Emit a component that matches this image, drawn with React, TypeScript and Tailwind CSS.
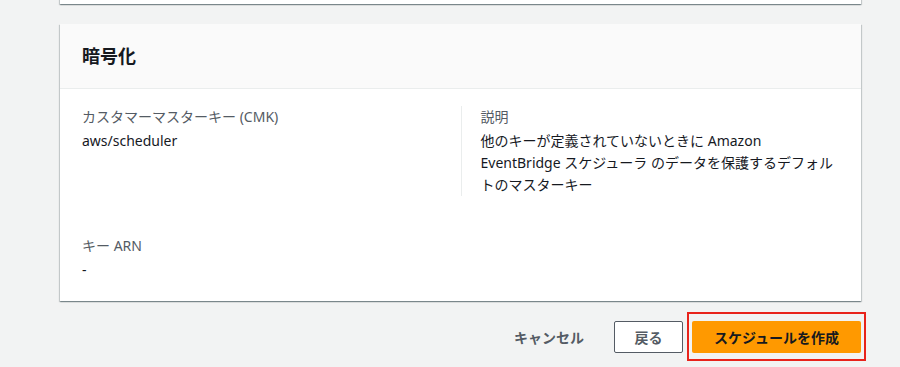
import React from "react";

const cardShadow =
  "shadow-[0_1px_1px_0_rgba(0,28,36,0.3),1px_1px_1px_0_rgba(0,28,36,0.15),-1px_1px_1px_0_rgba(0,28,36,0.15)]";

function Field({ label, children }: { label: string; children: React.ReactNode }) {
  return (
    <div>
      <div className="text-[14px] leading-[22px] text-[#545b64]">{label}</div>
      <div className="mt-[2px] text-[14px] leading-[22px] text-[#16191f]">{children}</div>
    </div>
  );
}

export default function App() {
  return (
    <div
      className="h-[367px] w-[900px] overflow-hidden bg-[#f2f3f3]"
      style={{ fontFamily: '"Noto Sans", "Noto Sans CJK JP", sans-serif' }}
    >
      <div className="pl-[60px]">
        {/* previous card, cut off at the top */}
        <div className={`-mt-[10px] h-[14px] w-[801px] bg-white ${cardShadow}`} />

        {/* encryption card */}
        <div className={`mt-[20px] w-[801px] bg-white ${cardShadow}`}>
          <div className="flex h-[65px] items-center border-b border-[#eaeded] bg-[#fafafa] px-[22px]">
            <h2 className="text-[18px] font-bold leading-[22px] text-[#16191f]">暗号化</h2>
          </div>
          <div className="px-[22px] pb-[20px] pt-[17px]">
            <div className="grid grid-cols-2">
              <Field label="カスタマーマスターキー (CMK)">aws/scheduler</Field>
              <div className="border-l border-[#eaeded] pl-[19px]">
                <Field label="説明">
                  <span className="whitespace-nowrap">
                    他のキーが定義されていないときに Amazon
                    <br />
                    EventBridge スケジューラ のデータを保護するデフォル
                    <br />
                    トのマスターキー
                  </span>
                </Field>
              </div>
            </div>
            <div className="mt-[39px]">
              <Field label="キー ARN">-</Field>
            </div>
          </div>
        </div>

        {/* actions */}
        <div className="mt-[20px] flex w-[801px] items-center justify-end">
          <button className="mr-[10px] h-[32px] px-[20px] text-[14px] font-bold text-[#545b64]">
            キャンセル
          </button>
          <button className="h-[32px] w-[69px] rounded-[2px] border border-[#545b64] bg-white text-[14px] font-bold text-[#545b64]">
            戻る
          </button>
          <div className="relative ml-[9px]">
            <button className="h-[32px] w-[169px] rounded-[2px] bg-[#ff9900] text-[14px] font-bold text-[#16191f]">
              スケジュールを作成
            </button>
            <span className="pointer-events-none absolute -bottom-[8px] -left-[5px] -right-[5px] -top-[9px] border-2 border-[#e8231b]" />
          </div>
        </div>
      </div>
    </div>
  );
}
